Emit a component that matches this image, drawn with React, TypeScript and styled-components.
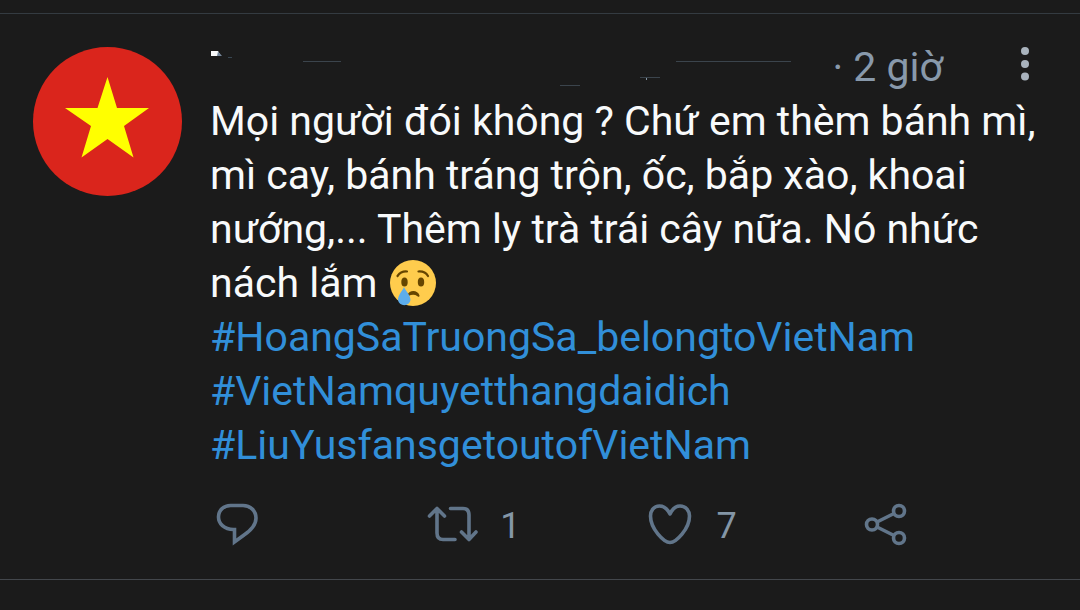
import React from "react";
import styled, { createGlobalStyle } from "styled-components";

const GlobalStyle = createGlobalStyle`
  *, *::before, *::after { box-sizing: border-box; }
  body {
    margin: 0;
    background: #1b1b1b;
    color: #f8fafb;
    font-family: Roboto, "Noto Sans", sans-serif;
    font-size: 41px;
    line-height: 54px;
  }
`;

const Timeline = styled.main`
  padding-top: 13px;
`;

const Post = styled.article`
  display: flex;
  align-items: flex-start;
  gap: 28px;
  padding: 26px 5px 31px 33px;
  border-top: 1px solid #343b41;
  border-bottom: 1px solid #43474c;
`;

const Avatar = styled.svg`
  flex: none;
  width: 149px;
  height: 149px;
  margin-top: 7px;
`;

const Content = styled.div`
  flex: 1;
  min-width: 0;
`;

const Header = styled.header`
  display: flex;
  height: 54px;
  padding-right: 35px;
`;

const HiddenName = styled.svg`
  flex: 1;
  min-width: 0;
  height: 54px;
`;

const Age = styled.time`
  color: #8899ab;
`;

const MenuButton = styled.button`
  display: flex;
  width: 30px;
  height: 48px;
  margin-left: 67px;
  padding: 0;
  border: 0;
  background: none;
  color: #a9b3bd;
`;

const Message = styled.p`
  margin: 0;
  padding-right: 35px;
`;

const Hashtag = styled.a`
  display: block;
  width: fit-content;
  color: #318fd9;
  text-decoration: none;
`;

const Emoji = styled.svg`
  width: 46px;
  height: 46px;
  margin: -4px 0 -4px 2px;
  vertical-align: -5px;
`;

const Actions = styled.div`
  display: grid;
  grid-template-columns: repeat(4, 1fr);
  margin-top: 28px;
`;

const Action = styled.button`
  display: flex;
  align-items: center;
  gap: 22px;
  height: 48px;
  padding: 0;
  border: 0;
  background: none;
  color: #8496a6;
  font: inherit;
  font-size: 36px;
`;

const ActionIcon = styled.svg`
  width: 52px;
  height: 48px;
  fill: none;
  stroke: #61758a;
  stroke-width: 3.6;
`;

const Count = styled.span`
  padding-top: 4px;
`;

const hashtags = [
  "#HoangSaTruongSa_belongtoVietNam",
  "#VietNamquyetthangdaidich",
  "#LiuYusfansgetoutofVietNam",
];

export default function App() {
  return (
    <>
      <GlobalStyle />
      <Timeline>
        <Post>
          <Avatar viewBox="0 0 149 149" role="img" aria-label="Avatar">
            <circle cx="74.5" cy="74.5" r="74.5" fill="#da251c" />
            <path
              d="M74.5 30 L84 61 H116 L91 79 L100.500 110.500 L74.500 92 L48.500 110.500 L58 79 L32 61 H64.500 Z"
              fill="#ffff00"
            />
          </Avatar>
          <Content>
            <Header>
              <HiddenName aria-hidden="true">
                <path d="M1 11 H8 L11 16 H1 Z" fill="#f8fafb" />
                <path d="M8 11.500 L12 16 H7 Z" fill="#74869a" />
                <path d="M18 17.500 H22" stroke="#384652" />
                <path
                  d="M93 21.500 H131 M350 45.500 H370 M430 37.500 H450 M466 21.500 H581"
                  stroke="#3b444c"
                />
                <path d="M436.500 38 V40" stroke="#8899a6" />
              </HiddenName>
              <Age>· 2 giờ</Age>
              <MenuButton aria-label="Menu">
                <svg width="30" height="48" fill="currentColor">
                  <circle cx="15" cy="11" r="4" />
                  <circle cx="15" cy="24" r="4" />
                  <circle cx="15" cy="36.500" r="4" />
                </svg>
              </MenuButton>
            </Header>
            <Message>
              Mọi người đói không ? Chứ em thèm bánh mì, mì cay, bánh tráng
              trộn, ốc, bắp xào, khoai nướng,... Thêm ly trà trái cây nữa. Nó
              nhức nách lắm{" "}
              <Emoji viewBox="0 0 46 46" role="img" aria-label="Crying face">
                <circle cx="23" cy="23" r="23" fill="#ffcc4d" />
                <ellipse cx="14.500" cy="22" rx="3.200" ry="4.600" fill="#664500" />
                <ellipse cx="31" cy="22" rx="3.200" ry="4.600" fill="#664500" />
                <path
                  d="M7.500 16 Q11 11 17 11.500 M28.500 11.500 Q35 11 38 16"
                  fill="none"
                  stroke="#664500"
                  strokeWidth="2.200"
                  strokeLinecap="round"
                />
                <path
                  d="M17.500 35 C19 29.500 28 29.500 29.500 35.500 C29.500 37 28.500 37 27.500 36.200 Q23.500 33.500 18.500 36 Z"
                  fill="#664500"
                />
                <path
                  d="M14 27 C16 31.500 20.500 35 20.500 40 A6.300 6 0 0 1 8 40 C8 35 12 31.500 14 27 Z"
                  fill="#5dadec"
                />
              </Emoji>
              {hashtags.map((tag) => (
                <Hashtag key={tag} href="#">
                  {tag}
                </Hashtag>
              ))}
            </Message>
            <Actions>
              <Action aria-label="Reply">
                <ActionIcon viewBox="-1 0 52 48">
                  <path
                    d="M22.500 29.500 C13 29.500 7.500 23.500 7.500 17 C7.500 10 13 5.500 19.500 5.500 H32 C39.500 5.500 45 11 45 18 C45 26 39 31 33 35 L23.500 42 V29.500 Z"
                    strokeLinejoin="miter"
                  />
                </ActionIcon>
              </Action>
              <Action aria-label="Retweet">
                <ActionIcon viewBox="0 0 52 48" strokeLinecap="round" strokeLinejoin="round">
                  <path d="M3.500 16 L11 8.500 L18.500 16 M11 9 V33 Q11 39.500 17 39.500 H29" />
                  <path d="M24.500 8.500 H37 Q43 8.500 43 15 V39 M35.500 32 L43 39.500 L50 32" />
                </ActionIcon>
                <Count>1</Count>
              </Action>
              <Action aria-label="Like">
                <ActionIcon viewBox="-1 0 52 48">
                  <path
                    d="M26 14 C23 8 19 6 15.500 6 C9.500 6 6.500 11 6.500 16 C6.500 29 20 42.500 26 42.500 C32 42.500 45.500 29 45.500 16 C45.500 11 42 6 36 6 C32 6 28.500 8.500 26 14 Z"
                    strokeLinejoin="round"
                  />
                </ActionIcon>
                <Count>7</Count>
              </Action>
              <Action aria-label="Share">
                <ActionIcon viewBox="-1 0 52 48">
                  <circle cx="12" cy="24.500" r="5.500" />
                  <circle cx="39" cy="11" r="5.500" />
                  <circle cx="39" cy="38" r="5.500" />
                  <path d="M17 22 L34 13.500 M17 27 L34 35.500" />
                </ActionIcon>
              </Action>
            </Actions>
          </Content>
        </Post>
      </Timeline>
    </>
  );
}
